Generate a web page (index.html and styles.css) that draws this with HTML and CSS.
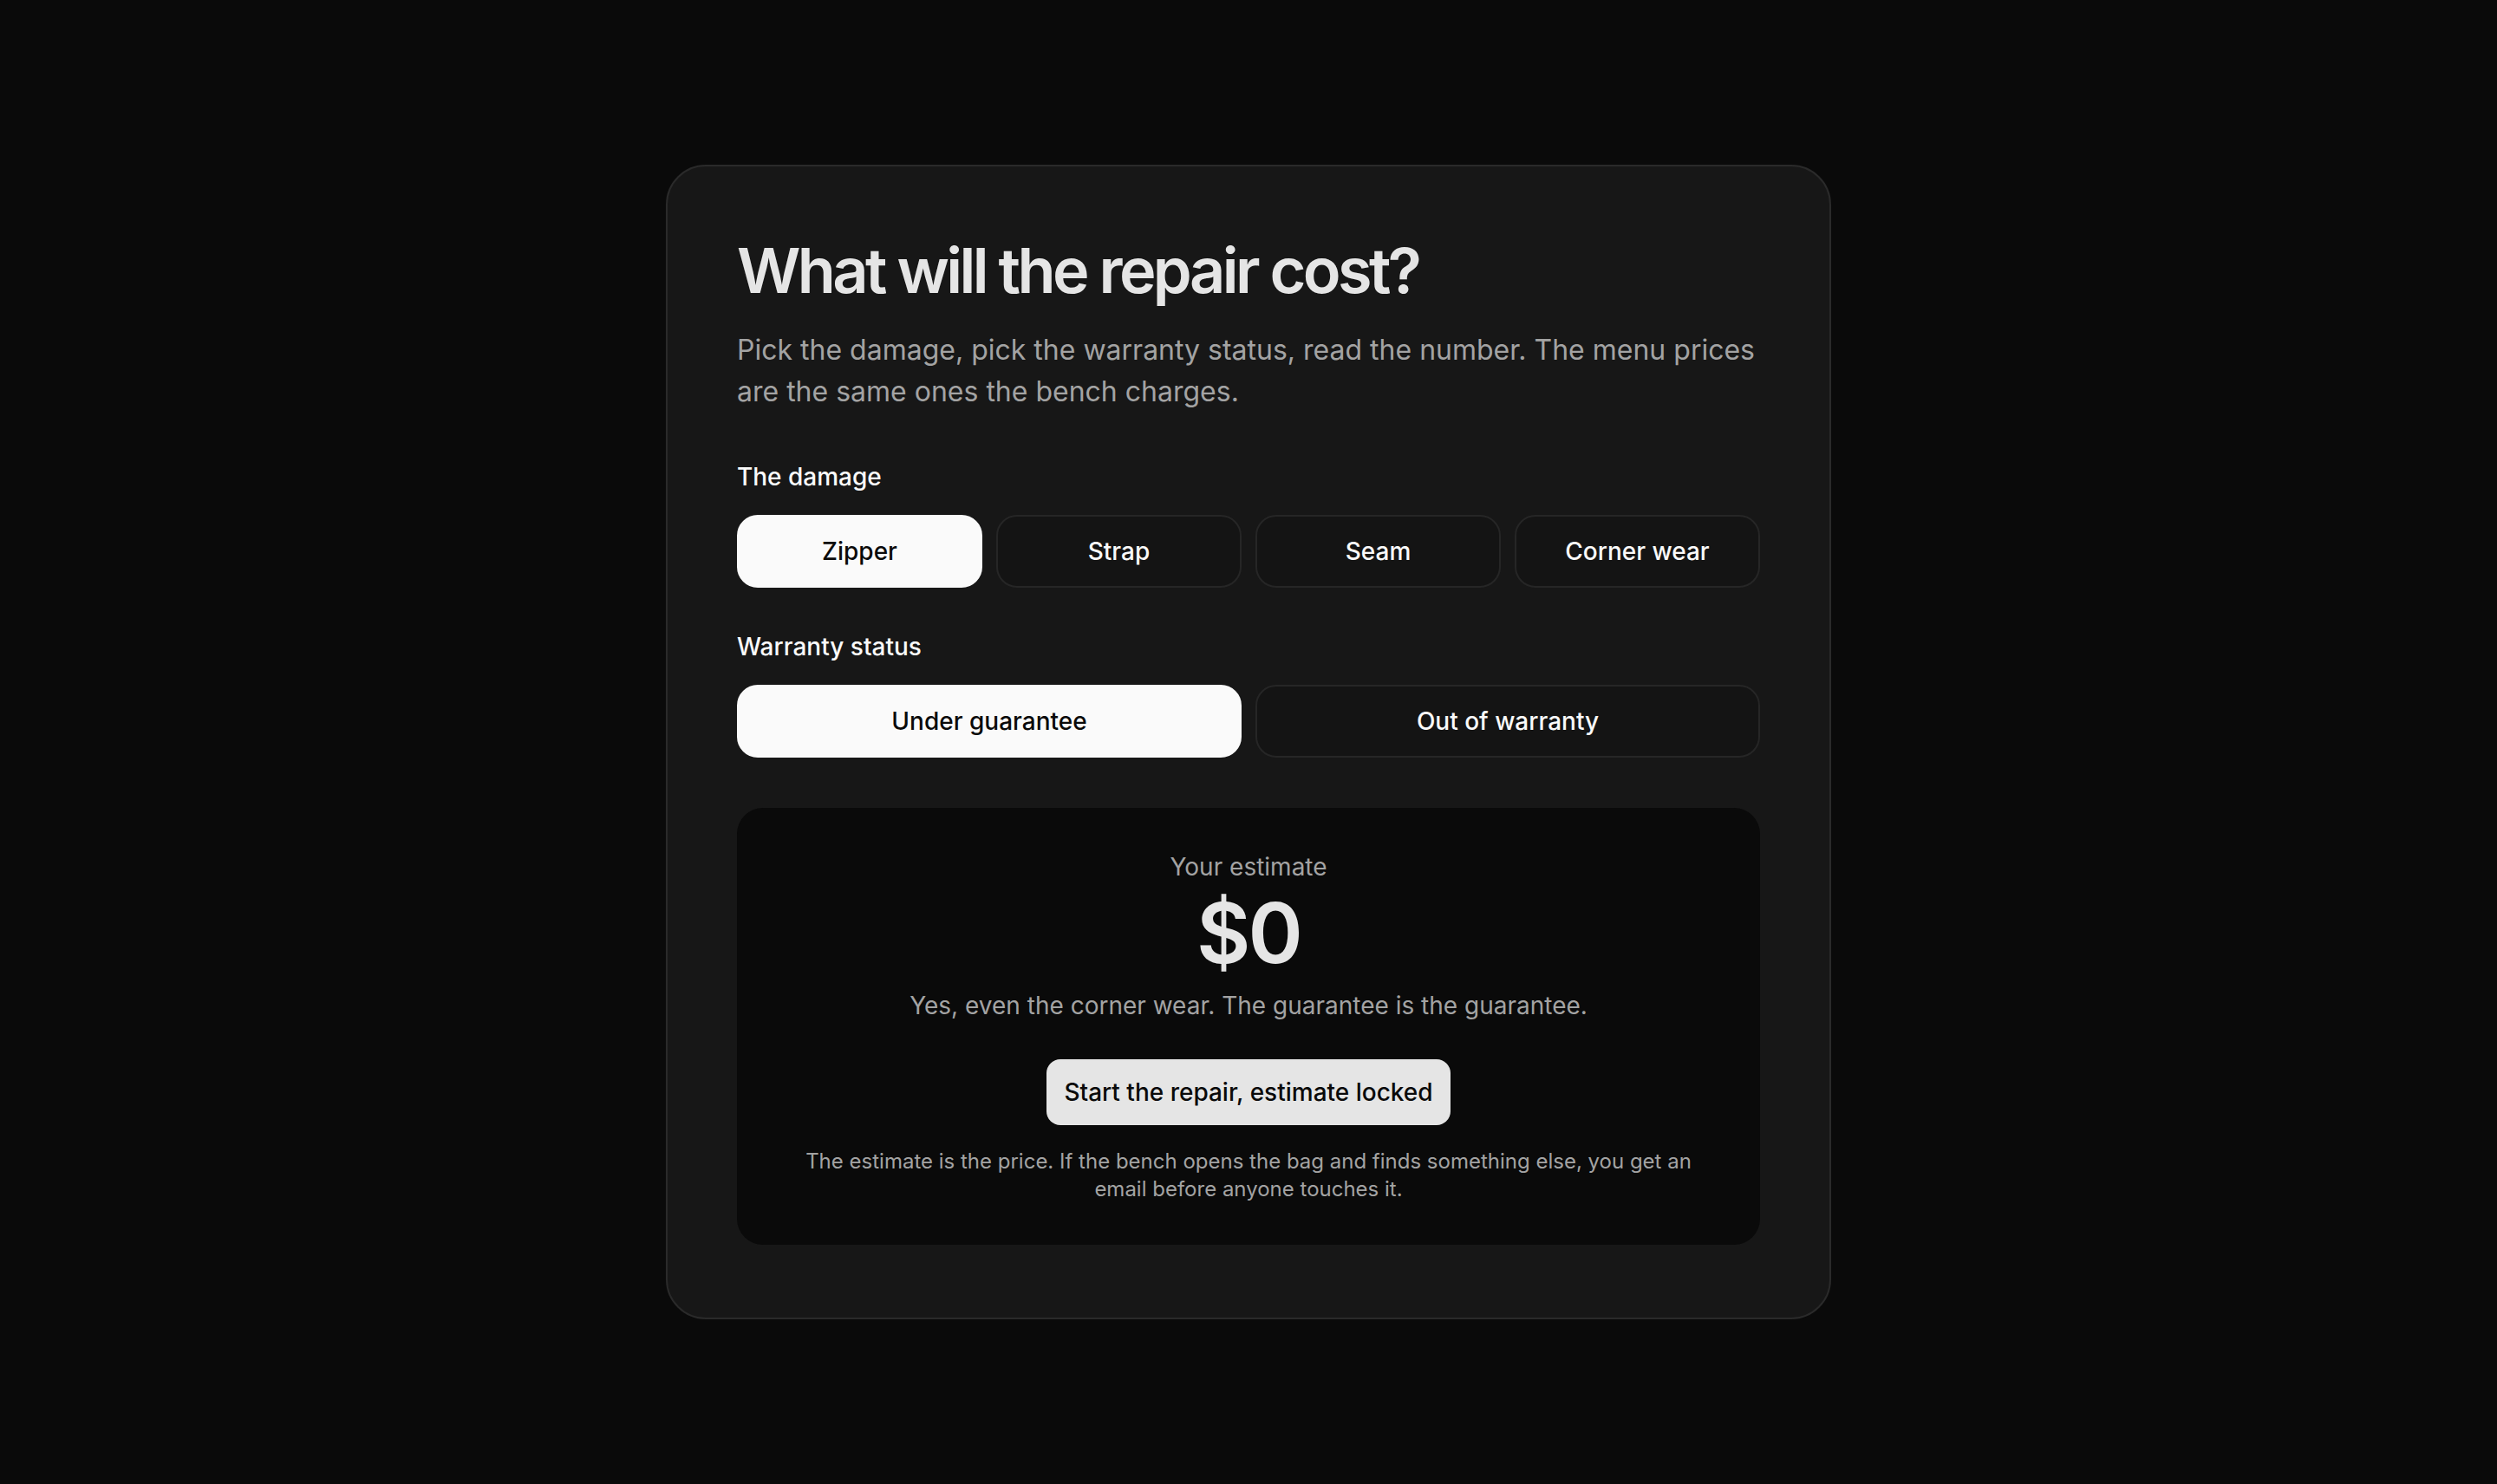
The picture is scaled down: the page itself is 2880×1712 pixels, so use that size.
FILE: index.html
```html
<!DOCTYPE html>
<html lang="en">
<head>
<meta charset="utf-8">
<meta name="viewport" content="width=device-width, initial-scale=1">
<title>What will the repair cost?</title>
<link rel="stylesheet" href="styles.css">
</head>
<body>
<main class="page">
  <section class="card">
    <h1 class="title">What will the repair cost?</h1>
    <p class="lead">Pick the damage, pick the warranty status, read the number. The menu prices are the same ones the bench charges.</p>

    <div class="group group-damage">
      <div class="label">The damage</div>
      <div class="options options-4">
        <button class="opt is-active" type="button">Zipper</button>
        <button class="opt" type="button">Strap</button>
        <button class="opt" type="button">Seam</button>
        <button class="opt" type="button">Corner wear</button>
      </div>
    </div>

    <div class="group group-warranty">
      <div class="label">Warranty status</div>
      <div class="options options-2">
        <button class="opt is-active" type="button">Under guarantee</button>
        <button class="opt" type="button">Out of warranty</button>
      </div>
    </div>

    <div class="estimate">
      <div class="est-label">Your estimate</div>
      <div class="est-value">$0</div>
      <p class="est-note">Yes, even the corner wear. The guarantee is the guarantee.</p>
      <button class="cta" type="button">Start the repair, estimate locked</button>
      <p class="fine">The estimate is the price. If the bench opens the bag and finds something else, you get an email before anyone touches it.</p>
    </div>
  </section>
</main>
</body>
</html>
```

FILE: styles.css
```css
* { box-sizing: border-box; }

html, body {
  margin: 0;
  padding: 0;
}

body {
  background: #0a0a0a;
  color: #fafafa;
  font-family: Inter, "Noto Sans", "Liberation Sans", sans-serif;
  -webkit-font-smoothing: antialiased;
}

.page {
  min-height: 100vh;
  display: flex;
  align-items: center;
  justify-content: center;
}

.card {
  width: 1344px;
  background: #171717;
  border: 2px solid #2a2a2a;
  border-radius: 46px;
  padding: 82px 80px 84px;
}

.title {
  margin: 0;
  font-size: 72px;
  line-height: 76px;
  font-weight: 600;
  letter-spacing: -0.05em;
  color: #e5e5e5;
}

.lead {
  margin: 30px 0 0;
  font-size: 32px;
  line-height: 48px;
  color: #a3a3a3;
}

.group-damage { margin-top: 54px; }
.group-warranty { margin-top: 48px; }

.label {
  font-size: 28px;
  line-height: 40px;
  font-weight: 500;
  color: #fafafa;
}

.options {
  margin-top: 24px;
  display: grid;
  gap: 16px;
}

.options-4 { grid-template-columns: repeat(4, 1fr); }
.options-2 { grid-template-columns: repeat(2, 1fr); }

.opt {
  height: 84px;
  border: 2px solid #262626;
  border-radius: 24px;
  background: #141414;
  color: #fafafa;
  font-family: inherit;
  font-size: 28px;
  font-weight: 500;
  line-height: 40px;
  padding: 0 24px;
  cursor: pointer;
}

.opt.is-active {
  background: #fafafa;
  border-color: #fafafa;
  color: #0a0a0a;
}

.estimate {
  margin-top: 58px;
  background: #0a0a0a;
  border-radius: 30px;
  padding: 48px 48px 48px;
  text-align: center;
}

.est-label {
  font-size: 28px;
  line-height: 40px;
  color: #a3a3a3;
}

.est-value {
  margin-top: 8px;
  font-size: 96px;
  line-height: 96px;
  font-weight: 600;
  letter-spacing: -0.03em;
  color: #e5e5e5;
}

.est-note {
  margin: 16px 0 0;
  font-size: 28px;
  line-height: 40px;
  color: #a3a3a3;
}

.cta {
  margin-top: 42px;
  height: 76px;
  padding: 0 20px;
  border: 0;
  border-radius: 16px;
  background: #e5e5e5;
  color: #0a0a0a;
  font-family: inherit;
  font-size: 28px;
  font-weight: 500;
  line-height: 40px;
  cursor: pointer;
}

.fine {
  margin: 26px 0 0;
  font-size: 24px;
  line-height: 32px;
  color: #a3a3a3;
}
```
